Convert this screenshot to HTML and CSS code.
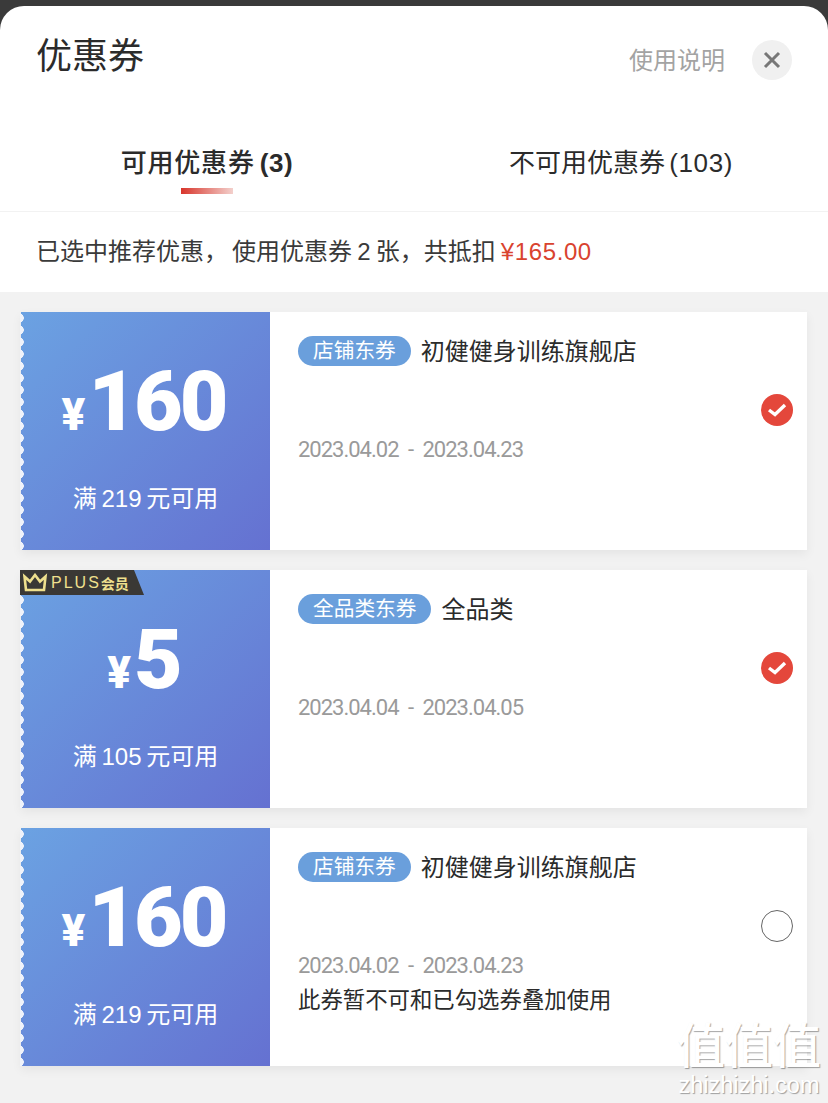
FILE: index.html
```html
<!DOCTYPE html>
<html lang="zh-CN">
<head>
    <meta charset="UTF-8">
    <title>优惠券</title>
    <link rel="stylesheet" href="styles.css">
</head>
<body>
    <div class="sheet">
        <div class="head">
            <h2>优惠券</h2>
            <span class="help">使用说明</span>
            <span class="close">
                <svg width="18" height="18" viewBox="0 0 18 18"><path d="M2 2L16 16M16 2L2 16" stroke="#777" stroke-width="3" fill="none"/></svg>
            </span>
        </div>

        <div class="tabs">
            <div class="tab on">可用优惠券 <em>(3)</em></div>
            <div class="tab">不可用优惠券 <em>(103)</em></div>
        </div>

        <div class="summary">已选中推荐优惠<span class="comma">，</span>使用优惠券 2 张，共抵扣 <span class="red">¥165.00</span></div>

        <div class="list">
            <!-- 券1 -->
            <div class="card">
                <div class="left">
                    <div class="money"><span class="yen">¥</span><span class="num">160</span></div>
                    <div class="limit">满 219 元可用</div>
                </div>
                <div class="right">
                    <div class="info">
                        <div class="title"><span class="chip">店铺东券</span>初健健身训练旗舰店</div>
                        <div class="date">2023.04.02 - 2023.04.23</div>
                    </div>
                    <span class="radio checked">
                        <svg width="20" height="16" viewBox="0 0 20 16"><path d="M2 8L8 12.5L18 3" stroke="#fff" stroke-width="3.4" fill="none"/></svg>
                    </span>
                </div>
            </div>
            <!-- 券2 -->
            <div class="card">
                <div class="plus">
                    <svg width="26" height="20" viewBox="0 0 26 20"><path d="M2.5 3.500L8 8.500L13 2L18 8.500L23.500 3.500L22 17H4Z" stroke="#efe08e" stroke-width="2.600" fill="none"/></svg>
                    <span class="plusText">PLUS</span><b>会员</b>
                </div>
                <div class="left">
                    <div class="money"><span class="yen">¥</span><span class="num">5</span></div>
                    <div class="limit">满 105 元可用</div>
                </div>
                <div class="right">
                    <div class="info">
                        <div class="title"><span class="chip">全品类东券</span>全品类</div>
                        <div class="date">2023.04.04 - 2023.04.05</div>
                    </div>
                    <span class="radio checked">
                        <svg width="20" height="16" viewBox="0 0 20 16"><path d="M2 8L8 12.5L18 3" stroke="#fff" stroke-width="3.4" fill="none"/></svg>
                    </span>
                </div>
            </div>
            <!-- 券3 -->
            <div class="card">
                <div class="left">
                    <div class="money"><span class="yen">¥</span><span class="num">160</span></div>
                    <div class="limit">满 219 元可用</div>
                </div>
                <div class="right">
                    <div class="info">
                        <div class="title"><span class="chip">店铺东券</span>初健健身训练旗舰店</div>
                        <div class="date">2023.04.02 - 2023.04.23</div>
                        <div class="note">此券暂不可和已勾选券叠加使用</div>
                    </div>
                    <span class="radio"></span>
                </div>
            </div>
        </div>
    </div>

    <!-- 水印 -->
    <div class="mark">
        <div class="markBig">值值值</div>
        <div class="markSmall">zhizhizhi.com</div>
    </div>
</body>
</html>
```

FILE: styles.css
```css
*{
    margin: 0;
    padding: 0;
    box-sizing: border-box;
}
html,body{
    height: 1103px;
    overflow: hidden;
}
body{
    background: #3a3a3a;
    padding-top: 6px;
    font-family: "Liberation Sans", "Noto Sans CJK SC", sans-serif;
    color: #2b2b2b;
}
.sheet{
    height: 1097px;
    background: #fff;
    border-radius: 24px 24px 0 0;
    overflow: hidden;
}
.head{
    height: 88px;
    padding: 0 36px 0 36px;
    display: flex;
    align-items: flex-start;
}
.head h2{
    flex: 1;
    font-size: 36px;
    font-weight: 400;
    line-height: 52px;
    margin-top: 25px;
}
.help{
    font-size: 24px;
    line-height: 36px;
    margin-top: 37px;
    color: #a3a3a3;
}
.close{
    width: 40px;
    height: 40px;
    margin-top: 34px;
    margin-left: 27px;
    border-radius: 50%;
    background: #f0f0f0;
    display: flex;
    justify-content: center;
    align-items: center;
}
.tabs{
    height: 118px;
    display: flex;
    border-bottom: 1px solid #f2f2f2;
}
.tab{
    flex: 1;
    padding-top: 50px;
    text-align: center;
    font-size: 26px;
    line-height: 38px;
    word-spacing: -3px;
}
.tab em{
    font-style: normal;
    letter-spacing: .6px;
}
.tab.on{
    font-weight: 500;
    letter-spacing: .8px;
}
.tab.on em{
    font-weight: 700;
}
.tab.on::after{
    content: "";
    display: block;
    width: 52px;
    height: 6px;
    margin: 6px auto 0;
    background: linear-gradient(90deg, #d8352b, #f3d0cc);
}
.summary{
    height: 80px;
    padding-left: 36px;
    font-size: 24px;
    line-height: 80px;
    color: #3a3a3a;
    word-spacing: -1.500px;
}
.comma{
    margin-right: 4px;
}
.red{
    color: #d9432f;
    letter-spacing: .6px;
}
.list{
    height: 811px;
    background: #f2f2f2;
    padding: 20px 21px 0;
    display: flex;
    flex-direction: column;
    gap: 20px;
}
.card{
    height: 238px;
    display: flex;
    position: relative;
    background: #fff;
    box-shadow: 0 4px 10px rgba(0,0,0,.06);
}
.left{
    width: 249px;
    position: relative;
    background: linear-gradient(135deg, #6ba2e2, #6571d1);
    color: #fff;
    text-align: center;
}
/* 左侧锯齿边 */
.left::before{
    content: "";
    position: absolute;
    left: -1px;
    top: 0;
    width: 5px;
    height: 100%;
    background: radial-gradient(circle at -1px 50%, #f0f3fa 4.500px, transparent 5px) 0 0 / 5px 12px repeat-y;
}
.money{
    height: 144px;
    padding: 40px 4px 0 0;
    display: flex;
    justify-content: center;
    align-items: baseline;
    font-family: Roboto, sans-serif;
    font-weight: 900;
}
.yen{
    font-size: 44px;
    margin-right: 3px;
    line-height: 100px;
}
.num{
    font-size: 84px;
    line-height: 100px;
    letter-spacing: -3px;
}
.limit{
    margin-top: 25px;
    font-size: 24px;
    line-height: 36px;
    word-spacing: -2px;
}
.right{
    flex: 1;
    display: flex;
    padding: 24px 14px 0 28px;
}
.info{
    flex: 1;
}
.title{
    display: flex;
    align-items: flex-start;
    height: 30px;
    font-size: 24px;
    line-height: 32px;
    color: #2b2b2b;
}
.chip{
    height: 30px;
    padding: 0 15px;
    margin-right: 10px;
    border-radius: 15px;
    background: #6a9fdc;
    color: #fff;
    font-size: 20.700px;
    line-height: 30px;
}
.date{
    margin-top: 68px;
    font-family: Roboto, sans-serif;
    font-size: 22px;
    line-height: 32px;
    color: #9a9a9a;
    letter-spacing: -1px;
    word-spacing: 5px;
}
.note{
    margin-top: 2px;
    font-size: 22.400px;
    line-height: 34px;
    color: #2b2b2b;
}
.radio{
    width: 32px;
    height: 32px;
    margin-top: 58px;
    border-radius: 50%;
    border: 1px solid #666;
    display: flex;
    justify-content: center;
    align-items: center;
}
.radio.checked{
    border: none;
    background: #e4473b;
}
/* PLUS角标 */
.plus{
    position: absolute;
    left: -1px;
    top: 0;
    z-index: 2;
    width: 124px;
    height: 25px;
    padding-left: 2px;
    display: flex;
    align-items: center;
    background: #3a3835;
    clip-path: polygon(0 0, 114px 0, 100% 100%, 0 100%);
    color: #efe08e;
    font-size: 14px;
}
.plusText{
    margin-left: 3px;
    font-size: 16px;
    letter-spacing: 2px;
}
.plus b{
    font-weight: 700;
}
/* 水印 */
.mark{
    position: absolute;
    right: 6px;
    bottom: 6px;
    width: 146px;
    text-align: center;
    color: #fff;
    text-shadow: 1px 1px 1px rgba(0,0,0,.35);
}
.markBig{
    font-size: 48px;
    line-height: 52px;
    font-weight: 500;
}
.markSmall{
    font-family: "Liberation Sans", sans-serif;
    font-size: 23.500px;
    line-height: 24px;
}
```
